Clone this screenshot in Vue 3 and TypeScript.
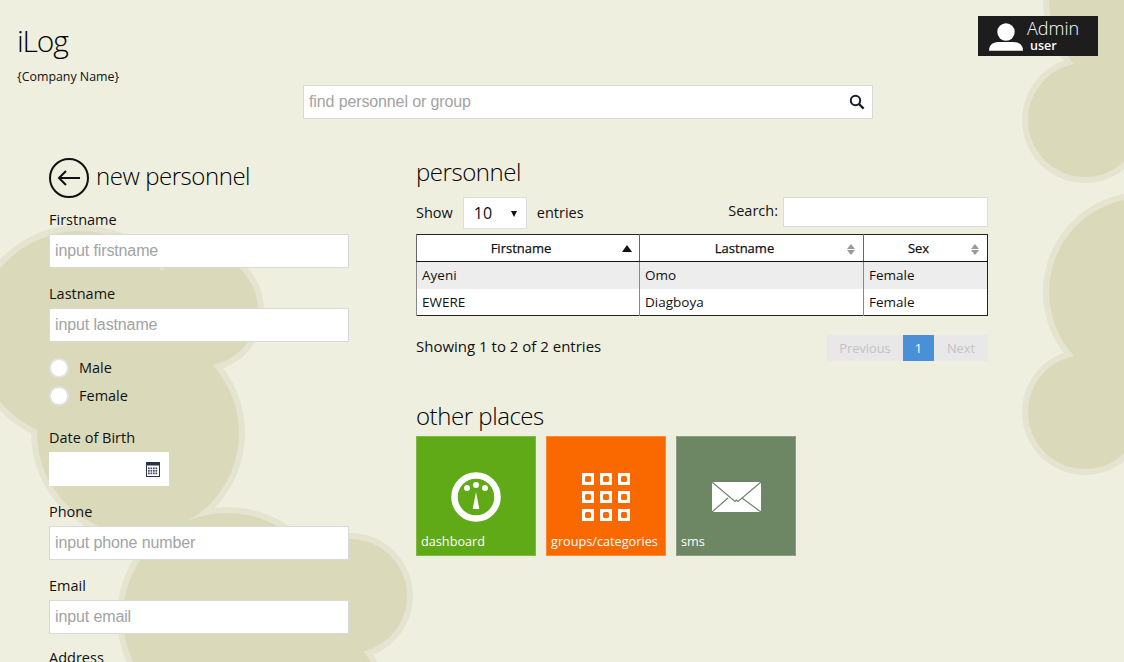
<script setup lang="ts">
// background blobs, halo ring is drawn under the fill so merged circles look like one shape
const blobs = [
  { cx: 80, cy: 335, r: 104 },
  { cx: 202, cy: 310, r: 56 },
  { cx: 138, cy: 433, r: 101 },
  { cx: 227, cy: 617, r: 104 },
  { cx: 350, cy: 596, r: 57 },
  { cx: 285, cy: 715, r: 101 },
  { cx: 1143, cy: 292, r: 94 },
  { cx: 1085, cy: 412, r: 57 },
  { cx: 1143, cy: 0, r: 94 },
  { cx: 1085, cy: 120, r: 57 },
]

const rows = [
  { first: 'Ayeni', last: 'Omo', sex: 'Female' },
  { first: 'EWERE', last: 'Diagboya', sex: 'Female' },
]

const gridCells = [0, 1, 2].flatMap((y) => [0, 1, 2].map((x) => ({ x: x * 18, y: y * 18 })))
const calCells = [0, 1, 2].flatMap((y) => [0, 1, 2, 3].map((x) => ({ x: 2 + x * 2.5, y: 5.5 + y * 2.5 })))
</script>

<template>
  <div class="page">
    <svg class="blobs" width="1124" height="662" viewBox="0 0 1124 662">
      <circle v-for="(b, i) in blobs" :key="'h' + i" :cx="b.cx" :cy="b.cy" :r="b.r + 6" fill="#e4e4d0" />
      <circle v-for="(b, i) in blobs" :key="'f' + i" :cx="b.cx" :cy="b.cy" :r="b.r" fill="#dadabb" />
    </svg>

    <header class="top">
      <div class="brand">
        <div class="logo">iLog</div>
        <div class="company">{Company Name}</div>
      </div>
      <div class="user">
        <svg class="user-icon" width="34" height="36" viewBox="0 0 34 36">
          <ellipse cx="17" cy="16" rx="8.7" ry="8.7" fill="#fff" />
          <path d="M0 34.8 C0 28 5 26 10 26 L24 26 C29 26 34 28 34 34.8 Z" fill="#fff" />
        </svg>
        <div class="user-text">
          <div class="user-name">Admin</div>
          <div class="user-role">user</div>
        </div>
      </div>
    </header>

    <div class="find">
      <input class="field find-input" placeholder="find personnel or group" />
      <svg class="find-icon" width="16" height="16" viewBox="0 0 16 16">
        <circle cx="6.5" cy="6.5" r="4.7" fill="none" stroke="#16202c" stroke-width="2" />
        <path d="M10 10 L14.6 14.6" stroke="#16202c" stroke-width="2.4" />
      </svg>
    </div>

    <main class="content">
      <section class="form">
        <div class="form-head">
          <svg width="40" height="40" viewBox="0 0 40 40">
            <circle cx="20" cy="20" r="19" fill="none" stroke="#111" stroke-width="2" />
            <path d="M31 20 H10 M17 13 L10 20 L17 27" fill="none" stroke="#111" stroke-width="2" />
          </svg>
          <h2 class="title">new personnel</h2>
        </div>

        <label class="lbl first-lbl">Firstname</label>
        <input class="field" placeholder="input firstname" />
        <label class="lbl">Lastname</label>
        <input class="field" placeholder="input lastname" />

        <div class="radios">
          <label class="radio"><input type="radio" name="sex" /><span>Male</span></label>
          <label class="radio"><input type="radio" name="sex" /><span>Female</span></label>
        </div>

        <label class="lbl dob-lbl">Date of Birth</label>
        <div class="date">
          <input class="field date-input" />
          <svg class="cal" width="14" height="15" viewBox="0 0 14 15">
            <rect x="0.5" y="0.5" width="13" height="14" fill="#fff" stroke="#2a3346" />
            <rect width="14" height="3.5" fill="#2a3346" />
            <rect v-for="(c, i) in calCells" :key="i" :x="c.x" :y="c.y" width="1.7" height="1.7" fill="#3a4a66" />
          </svg>
        </div>

        <label class="lbl">Phone</label>
        <input class="field" placeholder="input phone number" />
        <label class="lbl">Email</label>
        <input class="field" placeholder="input email" />
        <label class="lbl addr-lbl">Address</label>
      </section>

      <section class="list">
        <h2 class="title list-title">personnel</h2>
        <div class="tools">
          <div class="show">
            <span class="show-text">Show</span>
            <div class="select">10</div>
            <span class="show-text">entries</span>
          </div>
          <div class="search">
            <span>Search:</span>
            <input class="search-input" />
          </div>
        </div>

        <table class="grid">
          <colgroup>
            <col class="c1" />
            <col class="c2" />
            <col />
          </colgroup>
          <thead>
            <tr>
              <th>Firstname<span class="sort-up"></span></th>
              <th>Lastname<span class="sort-both"></span></th>
              <th>Sex<span class="sort-both"></span></th>
            </tr>
          </thead>
          <tbody>
            <tr v-for="r in rows" :key="r.first">
              <td>{{ r.first }}</td>
              <td>{{ r.last }}</td>
              <td>{{ r.sex }}</td>
            </tr>
          </tbody>
        </table>

        <div class="foot">
          <div class="info">Showing 1 to 2 of 2 entries</div>
          <div class="pager">
            <span class="pg pg-prev">Previous</span>
            <span class="pg pg-on">1</span>
            <span class="pg pg-next">Next</span>
          </div>
        </div>

        <h2 class="title places">other places</h2>
        <div class="tiles">
          <a class="tile green">
            <svg class="tile-icon" width="120" height="120" viewBox="0 0 120 120">
              <circle cx="60" cy="61" r="21.5" fill="none" stroke="#fff" stroke-width="6.5" />
              <circle cx="51" cy="52" r="3" fill="#fff" />
              <circle cx="60" cy="49" r="3" fill="#fff" />
              <circle cx="69" cy="52" r="3" fill="#fff" />
              <path d="M60 56 L63.3 73 H56.7 Z" fill="#fff" />
            </svg>
            <span>dashboard</span>
          </a>
          <a class="tile orange">
            <svg class="tile-icon" width="120" height="120" viewBox="0 0 120 120">
              <g v-for="(c, i) in gridCells" :key="i">
                <rect :x="36 + c.x" :y="37 + c.y" width="12" height="12" fill="#fff" />
                <rect :x="39 + c.x" :y="40 + c.y" width="6" height="6" rx="1.5" fill="#fa6800" />
              </g>
            </svg>
            <span>groups/categories</span>
          </a>
          <a class="tile olive">
            <svg class="tile-icon" width="120" height="120" viewBox="0 0 120 120">
              <rect x="36" y="46" width="49" height="30" fill="#fff" />
              <path d="M36 46 L59 65.5 L60.5 64 L62 65.5 L85 46 M36 76 L52 62 M85 76 L66 62" fill="none" stroke="#6d8764" stroke-width="1.2" />
            </svg>
            <span>sms</span>
          </a>
        </div>
      </section>
    </main>
  </div>
</template>

<style>
body {
  margin: 0;
  background: #efefe0;
}
</style>

<style scoped>
.page {
  position: relative;
  height: 662px;
  overflow: hidden;
  background: #efefe0;
  color: #111;
  font-family: "Open Sans", "Liberation Sans", sans-serif;
  font-size: 14.5px;
}
.blobs {
  position: absolute;
  left: 0;
  top: 0;
}
.top,
.find,
.content {
  position: relative;
}
.top {
  display: flex;
  justify-content: space-between;
  align-items: flex-start;
  height: 85px;
  padding: 16px 26px 0 17px;
  box-sizing: border-box;
}
.brand {
  padding-top: 4px;
}
.logo {
  font-size: 30px;
  font-weight: 300;
  line-height: 42px;
  letter-spacing: -1.2px;
  color: #000;
}
.company {
  font-size: 12.4px;
  line-height: 16px;
  margin-top: 7px;
}
.user {
  display: flex;
  width: 120px;
  height: 40px;
  padding-left: 11px;
  box-sizing: border-box;
  background: #1d1d1d;
  color: #fff;
}
.user-icon {
  margin-right: 4px;
  flex: none;
}
.user-name {
  padding-top: 1px;
  font-size: 18px;
  font-weight: 300;
  line-height: 23px;
}
.user-role {
  font-size: 12.5px;
  font-weight: 600;
  line-height: 11px;
  margin-left: 3px;
}
.find {
  width: 570px;
  margin-left: 303px;
}
.field {
  display: block;
  width: 300px;
  height: 34px;
  box-sizing: border-box;
  padding: 0 5px;
  border: 1px solid #d9d9d9;
  background: #fff;
  font-family: "Liberation Sans", Arial, sans-serif;
  font-size: 16px;
  letter-spacing: -0.12px;
  outline: none;
}
.field::placeholder {
  color: #a3a3a3;
  opacity: 1;
}
.find-input {
  width: 100%;
}
.find-icon {
  position: absolute;
  right: 8px;
  top: 9px;
}
.content {
  display: flex;
  gap: 67px;
  padding: 39px 0 0 49px;
}
.form {
  width: 300px;
  flex: none;
}
.form-head {
  display: flex;
  align-items: center;
  gap: 7px;
  height: 40px;
}
.form-head .title {
  margin-top: -4px;
}
.title {
  margin: 0;
  font-size: 24px;
  font-weight: 300;
  line-height: 34px;
  letter-spacing: -0.45px;
  color: #000;
}
.lbl {
  display: block;
  line-height: 20px;
  margin: 16px 0 4px;
}
.first-lbl {
  margin-top: 12px;
}
.radios {
  padding-top: 12px;
}
.radio {
  display: flex;
  align-items: center;
  height: 28px;
}
.radio span {
  margin-top: -2px;
}
.radio input {
  appearance: none;
  width: 20px;
  height: 20px;
  margin: 0 10px 0 0;
  box-sizing: border-box;
  border: 2px solid #e2e2e2;
  border-radius: 50%;
  background: #fff;
}
.dob-lbl {
  margin-top: 18px;
}
.addr-lbl {
  margin-top: 14px;
}
.date {
  position: relative;
  width: 120px;
}
.date-input {
  width: 100%;
  border-color: #fff;
}
.cal {
  position: absolute;
  right: 9px;
  top: 10px;
}
.list {
  width: 572px;
  flex: none;
}
.list-title {
  margin-top: -3px;
}
.tools {
  display: flex;
  justify-content: space-between;
  align-items: flex-start;
  margin-top: 8px;
}
.show {
  display: flex;
  align-items: center;
  gap: 10px;
  height: 32px;
}
.show-text {
  margin-top: -2px;
}
.select {
  position: relative;
  width: 64px;
  height: 32px;
  box-sizing: border-box;
  padding-left: 10px;
  border: 1px solid #dedede;
  background: #fff;
  font-size: 16px;
  line-height: 30px;
}
.select::after {
  content: "";
  position: absolute;
  right: 9px;
  top: 13px;
  border-left: 3px solid transparent;
  border-right: 3px solid transparent;
  border-top: 6px solid #111;
}
.search {
  display: flex;
  align-items: flex-start;
  gap: 5px;
  line-height: 28px;
}
.search-input {
  width: 205px;
  height: 30px;
  box-sizing: border-box;
  border: 1px solid #dcdcdc;
  background: #fff;
  outline: none;
}
.grid {
  width: 572px;
  margin-top: 5px;
  border-collapse: collapse;
  table-layout: fixed;
  background: #fff;
  border: 1px solid #222;
}
.c1 {
  width: 223px;
}
.c2 {
  width: 224px;
}
.grid th {
  position: relative;
  height: 27px;
  box-sizing: border-box;
  padding: 0 14px 0 0;
  border-bottom: 1px solid #111;
  border-left: 1px solid #666;
  font-size: 13px;
  font-weight: 400;
  -webkit-text-stroke: 0.25px #111;
  text-align: center;
}
.grid td {
  height: 27px;
  box-sizing: border-box;
  padding: 0 5px;
  border-left: 1px solid #888;
  font-size: 13.5px;
}
.grid tbody tr:first-child {
  background: #ededed;
}
.sort-up {
  position: absolute;
  right: 7px;
  top: 10px;
  border-left: 5px solid transparent;
  border-right: 5px solid transparent;
  border-bottom: 7px solid #111;
}
.sort-both {
  position: absolute;
  right: 8px;
  top: 9px;
  width: 8px;
  height: 10px;
}
.sort-both::before,
.sort-both::after {
  content: "";
  position: absolute;
  left: 0;
  border-left: 4px solid transparent;
  border-right: 4px solid transparent;
}
.sort-both::before {
  top: 0;
  border-bottom: 5px solid #999;
}
.sort-both::after {
  top: 6px;
  border-top: 5px solid #999;
}
.foot {
  display: flex;
  justify-content: space-between;
  align-items: flex-start;
  margin-top: 19px;
}
.info {
  font-size: 15px;
  line-height: 22px;
}
.pager {
  display: flex;
}
.pg {
  display: flex;
  align-items: center;
  justify-content: center;
  height: 26px;
  font-size: 12.8px;
  color: #c2c2c2;
  background: #e8e8e8;
}
.pg-prev {
  width: 76px;
}
.pg-on {
  width: 31px;
  color: #fff;
  background: #4a90d9;
}
.pg-next {
  width: 54px;
}
.places {
  margin-top: 38px;
}
.tiles {
  display: flex;
  gap: 10px;
  margin-top: 3px;
}
.tile {
  position: relative;
  display: block;
  width: 120px;
  height: 120px;
  box-sizing: border-box;
  color: #fff;
  font-size: 12.7px;
}
.tile-icon {
  position: absolute;
  left: -1px;
  top: -1px;
}
.tile span {
  position: absolute;
  left: 4px;
  bottom: 5px;
  line-height: 18px;
}
.green {
  background: #60a917;
  border: 1px solid #7db944;
}
.orange {
  background: #fa6800;
  border: 1px solid #fb8a38;
}
.olive {
  background: #6d8764;
  border: 1px solid #8aa081;
}
</style>
